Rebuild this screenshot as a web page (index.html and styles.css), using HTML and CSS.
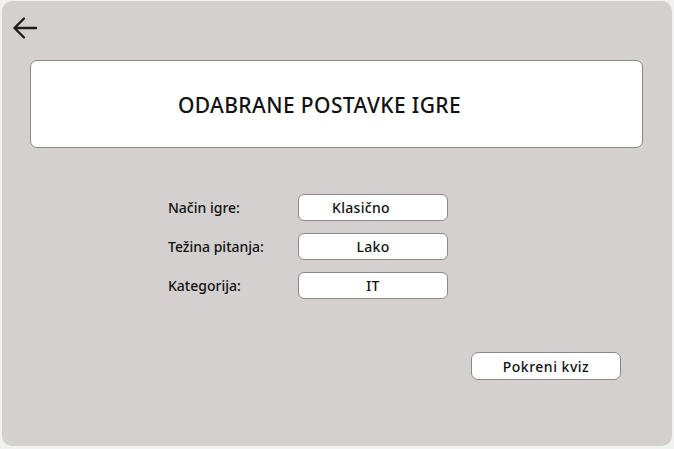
FILE: index.html
```html
<!DOCTYPE html>
<html lang="hr">
<head>
<meta charset="utf-8">
<title>Odabrane postavke igre</title>
<link rel="stylesheet" href="styles.css">
</head>
<body>
<div class="panel">
  <button class="back" aria-label="Natrag">
    <svg width="26" height="24" viewBox="0 0 26 24" fill="none" stroke="#1e1e1e" stroke-width="2.4" stroke-linecap="round" stroke-linejoin="round">
      <path d="M24 12H2.5M12 2.5L2.5 12l9.5 9.5"/>
    </svg>
  </button>
  <div class="title-box"><h1>ODABRANE POSTAVKE IGRE</h1></div>
  <div class="settings">
    <div class="row"><span class="label">Način igre:</span><span class="value value-left">Klasično</span></div>
    <div class="row"><span class="label">Težina pitanja:</span><span class="value">Lako</span></div>
    <div class="row"><span class="label">Kategorija:</span><span class="value">IT</span></div>
  </div>
  <div class="actions"><button class="start">Pokreni kviz</button></div>
</div>
</body>
</html>
```
FILE: styles.css
```css
html, body { margin: 0; padding: 0; }
body {
  background: #f2f1f1;
  font-family: "Noto Sans", "DejaVu Sans", sans-serif;
  color: #111;
  width: 674px;
  height: 449px;
  overflow: hidden;
}
.panel {
  box-sizing: border-box;
  margin: 1px 0 0 2px;
  width: 670px;
  height: 445px;
  background: #d3d0cf;
  border-radius: 10px;
  display: flex;
  flex-direction: column;
  padding: 15px 28px 0 28px;
}
.back {
  margin: 0 0 0 -18px;
  padding: 0;
  background: none;
  border: 0;
  width: 26px;
  height: 24px;
  display: block;
}
.back svg { display: block; }
.title-box {
  margin-top: 20px;
  height: 88px;
  box-sizing: border-box;
  background: #fff;
  border: 1px solid #8a8888;
  border-radius: 7px;
  display: flex;
  align-items: center;
  justify-content: center;
  width: 613px;
  padding-right: 34px;
}
.title-box h1 {
  margin: 0;
  font-size: 21px;
  font-weight: 500;
  letter-spacing: 0.4px;
  padding-top: 2px;
}
.settings {
  margin-top: 46px;
  margin-left: 138px;
  display: flex;
  flex-direction: column;
  gap: 12px;
}
.row {
  display: flex;
  align-items: center;
  height: 27px;
}
.label {
  width: 130px;
  font-size: 14px;
  font-weight: 500;
}
.value {
  box-sizing: border-box;
  width: 150px;
  height: 27px;
  background: #fff;
  border: 1px solid #8a8888;
  border-radius: 6px;
  display: flex;
  align-items: center;
  justify-content: center;
  font-size: 14px;
  font-weight: 500;
  letter-spacing: 0.3px;
}
.value-left { padding-right: 24px; }
.actions {
  margin-top: 53px;
  margin-left: 441px;
}
.start {
  box-sizing: border-box;
  width: 150px;
  height: 28px;
  background: #fff;
  border: 1px solid #8a8888;
  border-radius: 7px;
  font-family: inherit;
  font-size: 14px;
  font-weight: 500;
  letter-spacing: 0.5px;
  color: #111;
  padding: 0;
}
```
